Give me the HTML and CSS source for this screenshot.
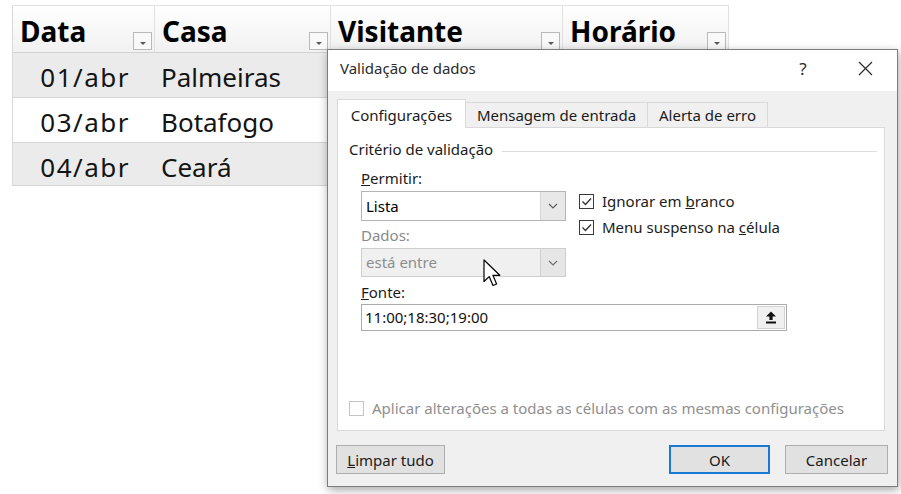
FILE: index.html
```
<!DOCTYPE html>
<html lang="pt-BR">
<head>
<meta charset="utf-8">
<title>Validação de dados</title>
<link rel="stylesheet" href="styles.css">
</head>
<body>
<div class="sheet">
  <div class="grid">
    <div class="hcell"><span class="htext">Data</span><span class="filter"><svg width="16" height="16" viewBox="0 0 16 16"><path d="M5 9h6l-3 3z" fill="#5a5a5a"/></svg></span></div>
    <div class="hcell"><span class="htext">Casa</span><span class="filter"><svg width="16" height="16" viewBox="0 0 16 16"><path d="M5 9h6l-3 3z" fill="#5a5a5a"/></svg></span></div>
    <div class="hcell"><span class="htext">Visitante</span><span class="filter"><svg width="16" height="16" viewBox="0 0 16 16"><path d="M5 9h6l-3 3z" fill="#5a5a5a"/></svg></span></div>
    <div class="hcell"><span class="htext">Horário</span><span class="filter"><svg width="16" height="16" viewBox="0 0 16 16"><path d="M5 9h6l-3 3z" fill="#5a5a5a"/></svg></span></div>

    <div class="cell date odd">01/abr</div><div class="cell odd">Palmeiras</div><div class="cell odd"></div><div class="cell odd"></div>
    <div class="cell date">03/abr</div><div class="cell">Botafogo</div><div class="cell"></div><div class="cell"></div>
    <div class="cell date odd">04/abr</div><div class="cell odd">Ceará</div><div class="cell odd"></div><div class="cell odd"></div>
  </div>
</div>

<div class="dialog">
  <div class="titlebar">
    <span class="title">Validação de dados</span>
    <span class="help">?</span>
    <span class="close"><svg width="15" height="15" viewBox="0 0 15 15"><path d="M1 1L14 14M14 1L1 14" stroke="#2b2b2b" stroke-width="1.2"/></svg></span>
  </div>
  <div class="body">
    <div class="tabs">
      <div class="tab active">Configurações</div>
      <div class="tab t-msg">Mensagem de entrada</div>
      <div class="tab t-err">Alerta de erro</div>
    </div>
    <div class="panel">
      <div class="legend">Critério de validação</div>
      <div class="settings">
        <div class="col-left">
          <div class="label first"><u>P</u>ermitir:</div>
          <div class="select">
            <span class="value">Lista</span>
            <span class="arrow"><svg width="10" height="6" viewBox="0 0 10 6"><path d="M1 1l4 4 4-4" fill="none" stroke="#606060" stroke-width="1.2"/></svg></span>
          </div>
          <div class="label muted">Dados:</div>
          <div class="select disabled">
            <span class="value">está entre</span>
            <span class="arrow"><svg width="10" height="6" viewBox="0 0 10 6"><path d="M1 1l4 4 4-4" fill="none" stroke="#707070" stroke-width="1.2"/></svg></span>
          </div>
        </div>
        <div class="col-right">
          <div class="check"><span class="box"><svg width="13" height="13" viewBox="0 0 13 13"><path d="M2.5 6.5l3 3 5.5-6" fill="none" stroke="#333" stroke-width="1.3"/></svg></span><span>Ignorar em <u>b</u>ranco</span></div>
          <div class="check"><span class="box"><svg width="13" height="13" viewBox="0 0 13 13"><path d="M2.5 6.5l3 3 5.5-6" fill="none" stroke="#333" stroke-width="1.3"/></svg></span><span>Menu suspenso na <u>c</u>élula</span></div>
        </div>
      </div>
      <div class="label source-label"><u>F</u>onte:</div>
      <div class="source">
        <span class="value">11:00;18:30;19:00</span>
        <span class="pick"><svg width="12" height="13" viewBox="0 0 12 13"><path d="M6 0.5L11 5.5H7.6V9H4.4V5.5H1z" fill="#111"/><rect x="1" y="10.5" width="10" height="2" fill="#111"/></svg></span>
      </div>
      <div class="apply"><span class="box empty"></span><span>Aplicar alterações a todas as células com as mesmas configurações</span></div>
    </div>
    <div class="actions">
      <div class="btn clear"><span><u>L</u>impar tudo</span></div>
      <div class="spacer"></div>
      <div class="btn ok">OK</div>
      <div class="btn cancel">Cancelar</div>
    </div>
  </div>
</div>

<svg class="cursor" width="20" height="29" viewBox="0 0 20 29"><path d="M1 1V22.5L6.2 17.6L10 26.5L13.6 25L9.9 16.3H16.8Z" fill="#fff" stroke="#000" stroke-width="1.2" stroke-linejoin="round"/></svg>
</body>
</html>
```

FILE: styles.css
```
html, body {
  margin: 0;
}

body {
  width: 901px;
  height: 494px;
  overflow: hidden;
  position: relative;
  background: #fff;
  font-family: "Noto Sans", "Open Sans", sans-serif;
}

/* spreadsheet table */
.sheet {
  padding: 5px 0 0 12px;
}

.grid {
  display: grid;
  grid-template-columns: 142px 176px 232px 166px;
  grid-template-rows: 47px 45px 45px 43px;
  width: 716px;
  border-left: 1px solid #d9d9d9;
  border-top: 1px solid #e2e2e2;
}

.hcell {
  display: flex;
  justify-content: space-between;
  align-items: flex-end;
  padding: 0 2px 2px 7px;
  box-sizing: border-box;
  background: linear-gradient(#ffffff, #f1f1f1);
  border-right: 1px solid #e0e0e0;
  border-bottom: 1px solid #d2d2d2;
}

.htext {
  font-weight: 700;
  font-size: 28px;
  line-height: 28px;
  margin-bottom: 5px;
  color: #000;
}

.filter {
  width: 19px;
  height: 18px;
  box-sizing: border-box;
  border: 1px solid #b9b9b9;
  background: #f9f9f9;
  display: flex;
  align-items: center;
  justify-content: center;
}

.cell {
  font-size: 26px;
  line-height: 26px;
  padding: 11px 0 0 6px;
  box-sizing: border-box;
  border-bottom: 1px solid #d3d3d3;
  color: #141414;
}

.cell.odd {
  background: #ebebeb;
}

.cell.date {
  text-align: right;
  letter-spacing: 1.5px;
  padding-right: 25px;
}

/* dialog window */
.dialog {
  position: absolute;
  left: 327px;
  top: 49px;
  width: 571px;
  height: 438px;
  box-sizing: border-box;
  border: 1px solid #7d7d7d;
  background: #f0f0f0;
  box-shadow: 1px 3px 9px rgba(0, 0, 0, 0.35);
  display: flex;
  flex-direction: column;
  color: #1b1b1b;
  font-size: 15px;
}

.titlebar {
  flex: none;
  height: 41px;
  box-sizing: border-box;
  background: #fff;
  display: flex;
  align-items: center;
  padding: 0 11px 5px 12px;
}

.title {
  flex: 1;
  font-size: 15px;
  color: #2b2b2b;
}

.help {
  width: 40px;
  text-align: center;
  font-size: 17px;
  color: #2b2b2b;
}

.close {
  width: 42px;
  margin-left: 21px;
  display: flex;
  justify-content: center;
}

.body {
  flex: 1;
  display: flex;
  flex-direction: column;
  padding: 8px 12px 12px 9px;
}

/* tabs */
.tabs {
  display: flex;
  align-items: flex-end;
  height: 29px;
  margin-bottom: -1px;
  position: relative;
  z-index: 1;
}

.tab {
  height: 26px;
  box-sizing: border-box;
  border: 1px solid #d9d9d9;
  border-left: none;
  background: #f0f0f0;
  display: flex;
  justify-content: center;
  align-items: flex-end;
  padding-bottom: 2px;
  line-height: 20px;
}

.tab.active {
  width: 129px;
  height: 29px;
  background: #fff;
  border-left: 1px solid #d9d9d9;
  border-bottom: none;
  padding-bottom: 3px;
}

.tab.t-msg {
  width: 182px;
}

.tab.t-err {
  width: 120px;
}

.panel {
  flex: none;
  height: 304px;
  box-sizing: border-box;
  border: 1px solid #d9d9d9;
  background: #fff;
  padding: 11px 7px 12px 11px;
  display: flex;
  flex-direction: column;
}

.legend {
  display: flex;
  align-items: center;
  line-height: 20px;
}

.legend::after {
  content: "";
  flex: 1;
  height: 1px;
  margin: 4px 0 0 9px;
  background: #dcdcdc;
}

.settings {
  display: flex;
  margin: 9px 0 0 12px;
}

.col-left {
  width: 205px;
  display: flex;
  flex-direction: column;
}

.label {
  line-height: 20px;
  margin: 4px 0 3px;
}

.label.first {
  margin-top: 0;
}

.label.muted {
  color: #8a8a8a;
}

.select {
  height: 30px;
  box-sizing: border-box;
  border: 1px solid #b5b5b5;
  background: #fff;
  display: flex;
}

.select .value {
  flex: 1;
  padding-left: 4px;
  line-height: 28px;
  color: #000;
}

.select .arrow {
  width: 24px;
  border-left: 1px solid #d6d6d6;
  background: #e8e8e8;
  display: flex;
  align-items: center;
  justify-content: center;
}

.select.disabled {
  height: 29px;
  background: #f0f0f0;
  border-color: #cdcdcd;
}

.select.disabled .value {
  color: #8d8d8d;
  line-height: 27px;
}

.select.disabled .arrow {
  background: #e6e6e6;
  border-left-color: #cfcfcf;
}

.col-right {
  margin-left: 13px;
  padding-top: 20px;
}

.check {
  height: 26px;
  display: flex;
  align-items: center;
}

.box {
  width: 15px;
  height: 15px;
  box-sizing: border-box;
  border: 1px solid #3a3a3a;
  background: #fff;
  margin-right: 8px;
  display: flex;
  align-items: center;
  justify-content: center;
}

.box.empty {
  border-color: #c4c4c4;
}

.source-label {
  margin: 5px 0 2px 12px;
}

.source {
  width: 426px;
  height: 27px;
  margin-left: 12px;
  box-sizing: border-box;
  border: 1px solid #ababab;
  background: #fff;
  display: flex;
}

.source .value {
  flex: 1;
  padding-left: 3px;
  line-height: 25px;
  color: #111;
}

.pick {
  width: 28px;
  margin: 1px;
  box-sizing: border-box;
  border: 1px solid #d3d3d3;
  background: #f0f0f0;
  display: flex;
  align-items: center;
  justify-content: center;
}

.apply {
  margin-top: auto;
  height: 20px;
  display: flex;
  align-items: center;
  color: #8f8f8f;
}

/* footer buttons */
.actions {
  display: flex;
  margin: 14px -3px 0 -1px;
}

.spacer {
  flex: 1;
}

.btn {
  height: 29px;
  box-sizing: border-box;
  border: 1px solid #adadad;
  background: #e1e1e1;
  display: flex;
  align-items: center;
  justify-content: center;
  color: #1b1b1b;
}

.btn.clear {
  width: 109px;
}

.btn.ok {
  width: 101px;
  border: 2px solid #1979d4;
}

.btn.cancel {
  width: 103px;
  margin-left: 15px;
}

/* mouse pointer resting over the Dados list */
.cursor {
  position: absolute;
  left: 483px;
  top: 259px;
}
```
